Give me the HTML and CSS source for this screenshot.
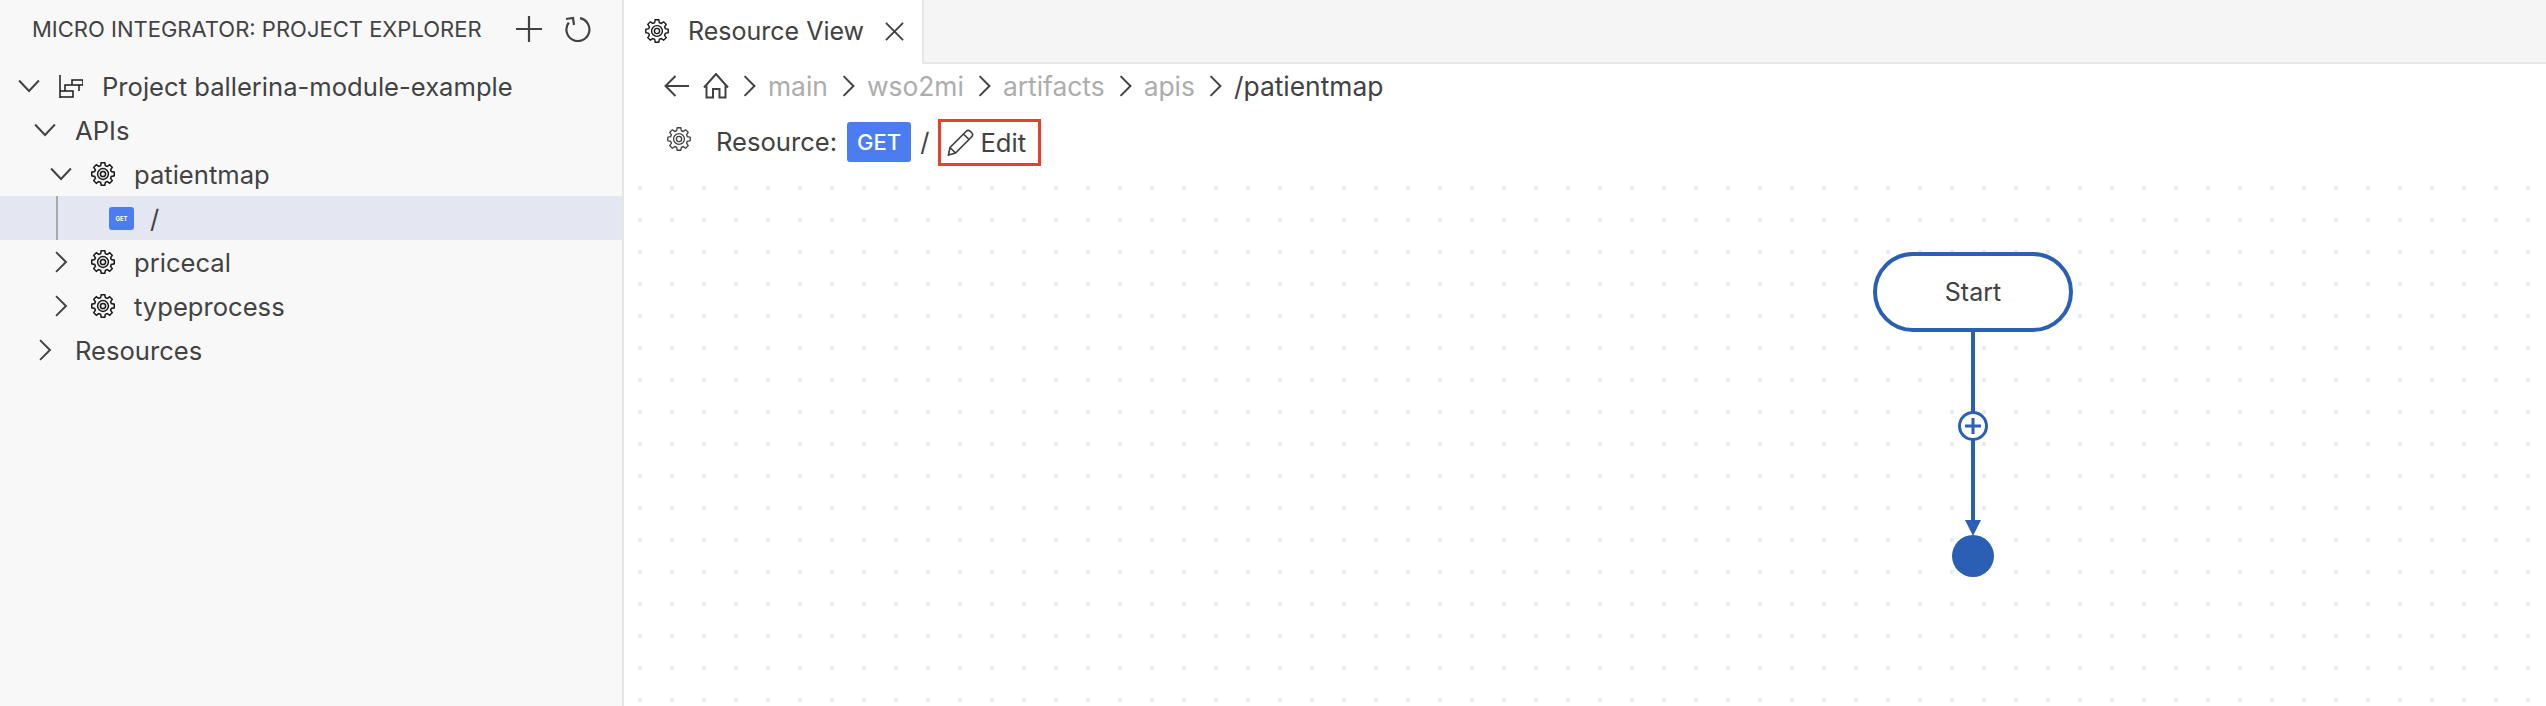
FILE: index.html
```html
<!DOCTYPE html>
<html lang="en">
<head>
  <meta charset="UTF-8">
  <title>Resource View</title>
  <link rel="stylesheet" href="styles.css">
</head>
<body>

<svg class="defs" width="0" height="0">
  <symbol id="gear" viewBox="0 0 24 24">
    <path d="M9.8 4.31L10.36 1.63H13.64L14.2 4.31L15.88 5L18.17 3.51L20.49 5.83L19 8.12L19.69 9.8L22.37 10.36V13.64L19.69 14.2L19 15.88L20.49 18.17L18.17 20.49L15.88 19L14.2 19.69L13.64 22.37H10.36L9.8 19.69L8.12 19L5.83 20.49L3.51 18.17L5 15.88L4.31 14.2L1.63 13.64V10.36L4.31 9.8L5 8.12L3.51 5.83L5.83 3.51L8.12 5Z"/>
    <circle cx="12" cy="12" r="5"/>
    <circle cx="12" cy="12" r="2.4"/>
  </symbol>
  <symbol id="down" viewBox="0 0 20 12"><path d="M1 1L10 10.5L19 1"/></symbol>
  <symbol id="right" viewBox="0 0 12 20"><path d="M1.5 1L10.5 10L1.5 19"/></symbol>
</svg>

<div class="sidebar">
  <div class="side-head">
    <span class="side-title">MICRO INTEGRATOR: PROJECT EXPLORER</span>
    <svg class="head-icon" viewBox="0 0 26 26"><path d="M0 13H26M13 0V26"/></svg>
    <svg class="head-icon" viewBox="0 0 26 26"><path d="M15 2.2A11.5 11.5 0 1 1 3.8 6.5M1 3L8 2L9 9"/></svg>
  </div>

  <div class="row level-0">
    <svg class="twistie"><use href="#down"/></svg>
    <svg class="icon" viewBox="0 0 24 24"><path d="M1 1V24M1 17H14V23H1M6 17V11H20V17M13 11V6H24V11H13"/></svg>
    <span class="label">Project ballerina-module-example</span>
  </div>
  <div class="row level-1">
    <svg class="twistie"><use href="#down"/></svg>
    <span class="label">APIs</span>
  </div>
  <div class="row level-2">
    <svg class="twistie"><use href="#down"/></svg>
    <svg class="icon gear"><use href="#gear"/></svg>
    <span class="label">patientmap</span>
  </div>
  <div class="row level-3 selected">
    <span class="guide"></span>
    <span class="chip">GET</span>
    <span class="label">/</span>
  </div>
  <div class="row level-2">
    <svg class="twistie"><use href="#right"/></svg>
    <svg class="icon gear"><use href="#gear"/></svg>
    <span class="label">pricecal</span>
  </div>
  <div class="row level-2">
    <svg class="twistie"><use href="#right"/></svg>
    <svg class="icon gear"><use href="#gear"/></svg>
    <span class="label">typeprocess</span>
  </div>
  <div class="row level-1">
    <svg class="twistie"><use href="#right"/></svg>
    <span class="label">Resources</span>
  </div>
</div>

<div class="main">
  <div class="tabs">
    <div class="tab">
      <svg class="tab-gear"><use href="#gear"/></svg>
      <span>Resource View</span>
      <svg class="tab-close" viewBox="0 0 20 20"><path d="M1 1L19 19M19 1L1 19"/></svg>
    </div>
  </div>

  <div class="crumbs">
    <svg class="back" viewBox="0 0 26 22"><path d="M25 11H1.5M11.5 1L1.5 11l10 10"/></svg>
    <svg class="home" viewBox="0 0 26 26"><path d="M1 14.5L13 1l12 13.5M3.5 11.5V24.5H10V16H16.5V24.5H22.5V11.5"/></svg>
    <svg class="sep"><use href="#right"/></svg>
    <span class="crumb">main</span>
    <svg class="sep"><use href="#right"/></svg>
    <span class="crumb">wso2mi</span>
    <svg class="sep"><use href="#right"/></svg>
    <span class="crumb">artifacts</span>
    <svg class="sep"><use href="#right"/></svg>
    <span class="crumb">apis</span>
    <svg class="sep"><use href="#right"/></svg>
    <span>/patientmap</span>
  </div>

  <div class="resource">
    <svg class="res-gear"><use href="#gear"/></svg>
    <span class="res-label">Resource:</span>
    <span class="method">GET</span>
    <span class="slash">/</span>
    <div class="edit">
      <svg class="pencil" viewBox="0 0 27 27"><path d="M3 18.5L19 2.5C20.5 1 22 1 23.5 2.5L24.5 3.5C26 5 26 6.500 24.5 8L8.500 24L1.500 26ZM3 18.500L8.500 24M16.500 5L22 10.500"/></svg>
      <span>Edit</span>
    </div>
  </div>

  <div class="canvas">
    <div class="start">Start</div>
    <svg class="flow" width="60" height="260" viewBox="0 0 60 260">
      <path class="flow-line" d="M30 0V190"/>
      <circle class="flow-plus" cx="30" cy="94" r="13.5"/>
      <path class="flow-line thin" d="M22 94H38M30 86V102"/>
      <path class="flow-fill" d="M22 188H38L30 204Z"/>
      <circle class="flow-fill" cx="30" cy="224" r="21"/>
    </svg>
  </div>
</div>

</body>
</html>
```

FILE: styles.css
```css
* {
  box-sizing: border-box;
}

html, body {
  height: 100%;
}

body {
  display: flex;
  margin: 0;
  overflow: hidden;
  background: white;
  color: #424242;
  font-family: Inter, sans-serif;
  font-size: 25.6px;
}

svg {
  fill: none;
  stroke: #424242;
  flex: none;
}

.defs {
  position: absolute;
}

/* sidebar */
.sidebar {
  width: 624px;
  flex: none;
  background: #f8f8f8;
  border-right: 2px solid #e5e5e5;
}

.side-head {
  display: flex;
  align-items: center;
  height: 64px;
  padding: 0 0 6px 32px;
}

.side-title {
  width: 484px;
  font-size: 22px;
  white-space: nowrap;
}

.head-icon {
  width: 26px;
  height: 26px;
  margin-right: 23px;
  stroke-width: 2.2;
}

.row {
  position: relative;
  display: flex;
  align-items: center;
  height: 44px;
}

.level-0 { padding-left: 18px; }
.level-1 { padding-left: 34px; }
.level-2 { padding-left: 50px; }
.level-3 { padding-left: 109px; }

.selected {
  background: #e4e6f1;
}

.guide {
  position: absolute;
  left: 56px;
  top: 0;
  bottom: 0;
  width: 2px;
  background: #a9a9a9;
}

.twistie {
  width: 22px;
  height: 22px;
  stroke-width: 1.8;
}

.icon {
  width: 24px;
  height: 24px;
  margin-left: 19px;
  margin-right: 19px;
  stroke: #1a1a1a;
  stroke-width: 1.5;
}

.level-1 .twistie {
  margin-right: 19px;
}

.gear {
  width: 26px;
  height: 26px;
  margin-left: 18px;
  margin-right: 18px;
  stroke-width: 1.4;
}

.chip {
  width: 25px;
  height: 23px;
  margin-right: 16px;
  border-radius: 3px;
  background: #4c7df0;
  color: white;
  font-size: 6px;
  font-weight: 700;
  line-height: 23px;
  text-align: center;
}

/* editor side */
.main {
  flex: 1;
  display: flex;
  flex-direction: column;
}

.tabs {
  height: 64px;
  flex: none;
  background: #f5f5f5;
  border-bottom: 2px solid #e8e8e8;
}

.tab {
  display: flex;
  align-items: center;
  width: 300px;
  height: 64px;
  padding: 0 0 2px 20px;
  background: white;
  border-right: 2px solid #e8e8e8;
  font-size: 25px;
}

.tab-gear {
  width: 26px;
  height: 26px;
  margin-right: 18px;
  stroke: #1a1a1a;
  stroke-width: 1.3;
}

.tab-close {
  width: 19px;
  height: 19px;
  margin-left: 21px;
  stroke-width: 2;
}

.crumbs {
  display: flex;
  align-items: center;
  height: 44px;
  padding-left: 40px;
  font-size: 26.4px;
}

.back {
  width: 26px;
  height: 22px;
  margin-right: 13px;
  stroke-width: 2;
}

.home {
  width: 26px;
  height: 26px;
  margin-right: 12px;
  stroke-width: 2;
}

.sep {
  width: 17px;
  height: 22px;
  margin-right: 10px;
  stroke-width: 1.8;
}

.crumb {
  margin-right: 12px;
  color: #adadad;
}

.resource {
  display: flex;
  align-items: center;
  height: 66px;
  flex: none;
  padding: 2px 0 0 42px;
}

.res-gear {
  width: 26px;
  height: 26px;
  margin-right: 24px;
  margin-bottom: 6px;
  stroke-width: 1.2;
}

.res-label {
  margin-right: 10px;
  margin-bottom: 2px;
}

.method {
  width: 64px;
  height: 40px;
  margin-right: 9px;
  border-radius: 3px;
  background: #4c7df0;
  color: white;
  font-size: 22px;
  font-weight: 500;
  line-height: 40px;
  text-align: center;
}

.slash {
  margin-right: 9px;
  margin-bottom: 2px;
}

.edit {
  display: flex;
  align-items: center;
  width: 103px;
  height: 47px;
  padding-left: 6px;
  border: 3px solid #e8402a;
}

.pencil {
  width: 27px;
  height: 27px;
  margin-right: 6px;
  stroke-width: 1.7;
}

/* flow diagram */
.canvas {
  position: relative;
  flex: 1;
  background-image: conic-gradient(at 4px 4px, transparent 75%, #e8ecf1 0);
  background-size: 32px 32px;
  background-position: 14px 12px;
}

.start {
  position: absolute;
  left: 1249px;
  top: 78px;
  width: 200px;
  height: 80px;
  border: 4px solid #2a5fb4;
  border-radius: 40px;
  background: white;
  font-size: 25px;
  line-height: 72px;
  text-align: center;
}

.flow {
  position: absolute;
  left: 1319px;
  top: 158px;
  overflow: visible;
}

.flow-line {
  stroke: #2a5fb4;
  stroke-width: 4;
}

.flow-line.thin {
  stroke-width: 3;
}

.flow-plus {
  fill: white;
  stroke: #2a5fb4;
  stroke-width: 3;
}

.flow-fill {
  fill: #2a5fb4;
  stroke: none;
}
```
